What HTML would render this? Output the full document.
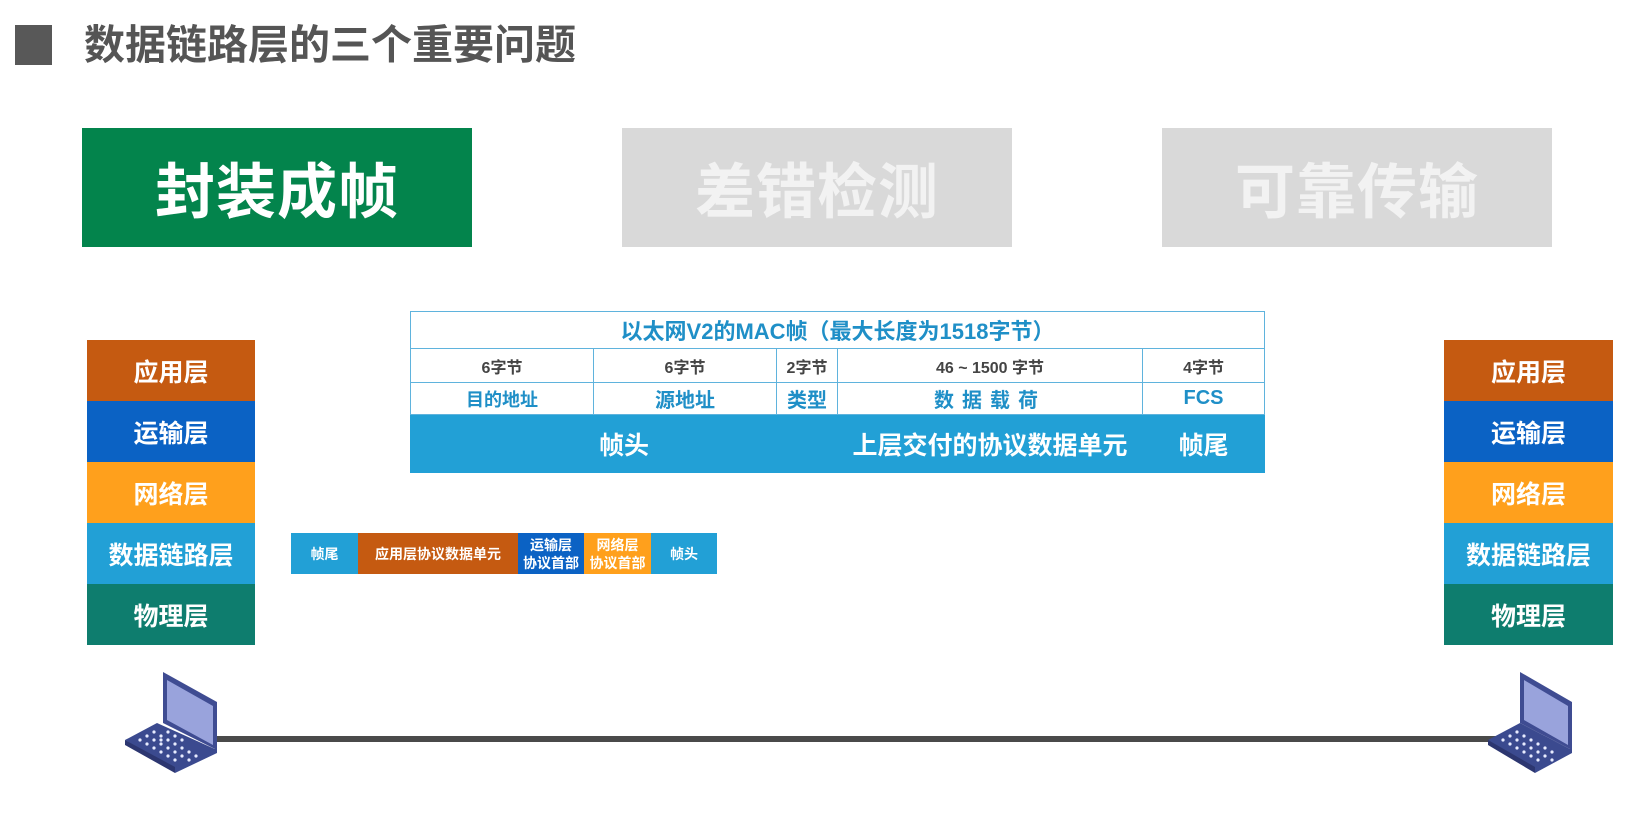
<!DOCTYPE html>
<html><head><meta charset="utf-8"><style>
*{margin:0;padding:0;box-sizing:border-box}
body{width:1634px;height:820px;background:#fff;position:relative;overflow:hidden;font-family:"Liberation Sans","Noto Sans CJK SC",sans-serif;font-weight:bold}
.a{position:absolute}
.c{display:flex;align-items:center;justify-content:center;color:#fff;position:absolute}
.big{font-size:60px;letter-spacing:1px}
.st div{height:61px;font-size:25px}
td{border:1px solid #5fb3dd;text-align:center;color:#1f8fc7;padding:0}
</style></head><body>
<div class="a" style="left:15px;top:25px;width:37px;height:40px;background:#585858"></div>
<div class="a" style="left:84px;top:19px;font-size:41px;line-height:52px;color:#555;letter-spacing:0px">数据链路层的三个重要问题</div>

<div class="c big" style="left:82px;top:128px;width:390px;height:119px;background:#03844c">封装成帧</div>
<div class="c big" style="left:622px;top:128px;width:390px;height:119px;background:#d9d9d9;color:#f2f2f2">差错检测</div>
<div class="c big" style="left:1162px;top:128px;width:390px;height:119px;background:#d9d9d9;color:#f2f2f2">可靠传输</div>

<div class="a st" style="left:87px;top:340px;width:168px">
<div class="c" style="position:relative;background:#c55a11">应用层</div>
<div class="c" style="position:relative;background:#0b62c4">运输层</div>
<div class="c" style="position:relative;background:#ffa01c">网络层</div>
<div class="c" style="position:relative;background:#22a0d6">数据链路层</div>
<div class="c" style="position:relative;background:#0e7d6e">物理层</div>
</div>
<div class="a st" style="left:1444px;top:340px;width:169px">
<div class="c" style="position:relative;background:#c55a11">应用层</div>
<div class="c" style="position:relative;background:#0b62c4">运输层</div>
<div class="c" style="position:relative;background:#ffa01c">网络层</div>
<div class="c" style="position:relative;background:#22a0d6">数据链路层</div>
<div class="c" style="position:relative;background:#0e7d6e">物理层</div>
</div>

<table class="a" style="left:410px;top:311px;width:854px;border-collapse:collapse;table-layout:fixed">
<colgroup><col style="width:183px"><col style="width:183px"><col style="width:61px"><col style="width:305px"><col style="width:122px"></colgroup>
<tr style="height:37px"><td colspan="5" style="font-size:22px">以太网V2的MAC帧（最大长度为1518字节）</td></tr>
<tr style="height:34px;font-size:16px"><td style="color:#444">6字节</td><td style="color:#444">6字节</td><td style="color:#444">2字节</td><td style="color:#444">46 ~ 1500 字节</td><td style="color:#444">4字节</td></tr>
<tr style="height:32px"><td style="font-size:18px">目的地址</td><td style="font-size:20px">源地址</td><td style="font-size:20px">类型</td><td style="font-size:20px;letter-spacing:8px">数据载荷</td><td style="font-size:20px">FCS</td></tr>
<tr style="height:58px;background:#22a0d6"><td colspan="3" style="color:#fff;font-size:25px;border-color:#22a0d6">帧头</td><td style="color:#fff;font-size:25px;border-color:#22a0d6">上层交付的协议数据单元</td><td style="color:#fff;font-size:25px;border-color:#22a0d6">帧尾</td></tr>
</table>

<div class="c" style="left:291px;top:533px;width:67px;height:41px;background:#22a0d6;font-size:14px">帧尾</div>
<div class="c" style="left:358px;top:533px;width:160px;height:41px;background:#c55a11;font-size:14px">应用层协议数据单元</div>
<div class="c" style="left:518px;top:533px;width:66px;height:41px;background:#0b62c4;font-size:14px;line-height:18px;text-align:center">运输层<br>协议首部</div>
<div class="c" style="left:584px;top:533px;width:67px;height:41px;background:#ffa01c;font-size:14px;line-height:18px;text-align:center">网络层<br>协议首部</div>
<div class="c" style="left:651px;top:533px;width:66px;height:41px;background:#22a0d6;font-size:14px">帧头</div>

<div class="a" style="left:214px;top:736px;width:1285px;height:6px;background:#4a4a4a"></div>

<svg class="a" style="left:110px;top:660px" width="130" height="130">
<polygon points="15,80 47,63 107,90 65,112" fill="#3b4a8f"/>
<polygon points="15,80 65,107 65,113 15,85" fill="#2c3670"/>
<polygon points="65,107 107,88 107,93 65,113" fill="#3b4a8f"/>
<polygon points="53,12 107,42 107,90 53,63" fill="#3f4c92"/>
<polygon points="57,20 103,46 103,85 57,60" fill="#99a3dc"/>
<g fill="#e8ecff">
<circle cx="30" cy="80" r="1.6"/><circle cx="37" cy="76" r="1.6"/><circle cx="44" cy="72" r="1.6"/>
<circle cx="37" cy="84" r="1.6"/><circle cx="44" cy="80" r="1.6"/><circle cx="51" cy="76" r="1.6"/><circle cx="58" cy="80" r="1.6"/><circle cx="65" cy="84" r="1.6"/>
<circle cx="44" cy="88" r="1.6"/><circle cx="51" cy="84" r="1.6"/><circle cx="58" cy="88" r="1.6"/><circle cx="65" cy="92" r="1.6"/><circle cx="72" cy="88" r="1.6"/><circle cx="79" cy="92" r="1.6"/>
<circle cx="51" cy="92" r="1.6"/><circle cx="58" cy="96" r="1.6"/><circle cx="65" cy="100" r="1.6"/><circle cx="72" cy="96" r="1.6"/><circle cx="79" cy="100" r="1.6"/><circle cx="86" cy="96" r="1.6"/>
<circle cx="51" cy="80" r="1.6"/><circle cx="58" cy="72" r="1.6"/><circle cx="65" cy="76" r="1.6"/><circle cx="72" cy="80" r="1.6"/>
</g>
</svg>
<svg class="a" style="left:1480px;top:660px" width="130" height="130">
<polygon points="8,80 40,63 92,90 55,112" fill="#3b4a8f"/>
<polygon points="8,80 55,107 55,113 8,85" fill="#2c3670"/>
<polygon points="55,107 92,88 92,93 55,113" fill="#3b4a8f"/>
<polygon points="40,12 92,42 92,90 40,63" fill="#3f4c92"/>
<polygon points="44,20 88,46 88,85 44,60" fill="#99a3dc"/>
<g fill="#e8ecff">
<circle cx="23" cy="80" r="1.6"/><circle cx="30" cy="76" r="1.6"/><circle cx="37" cy="72" r="1.6"/>
<circle cx="30" cy="84" r="1.6"/><circle cx="37" cy="80" r="1.6"/><circle cx="44" cy="76" r="1.6"/><circle cx="51" cy="80" r="1.6"/><circle cx="58" cy="84" r="1.6"/>
<circle cx="37" cy="88" r="1.6"/><circle cx="44" cy="84" r="1.6"/><circle cx="51" cy="88" r="1.6"/><circle cx="58" cy="92" r="1.6"/><circle cx="65" cy="88" r="1.6"/><circle cx="72" cy="92" r="1.6"/>
<circle cx="44" cy="92" r="1.6"/><circle cx="51" cy="96" r="1.6"/><circle cx="58" cy="100" r="1.6"/><circle cx="65" cy="96" r="1.6"/><circle cx="72" cy="100" r="1.6"/>
</g>
</svg>
</body></html>
